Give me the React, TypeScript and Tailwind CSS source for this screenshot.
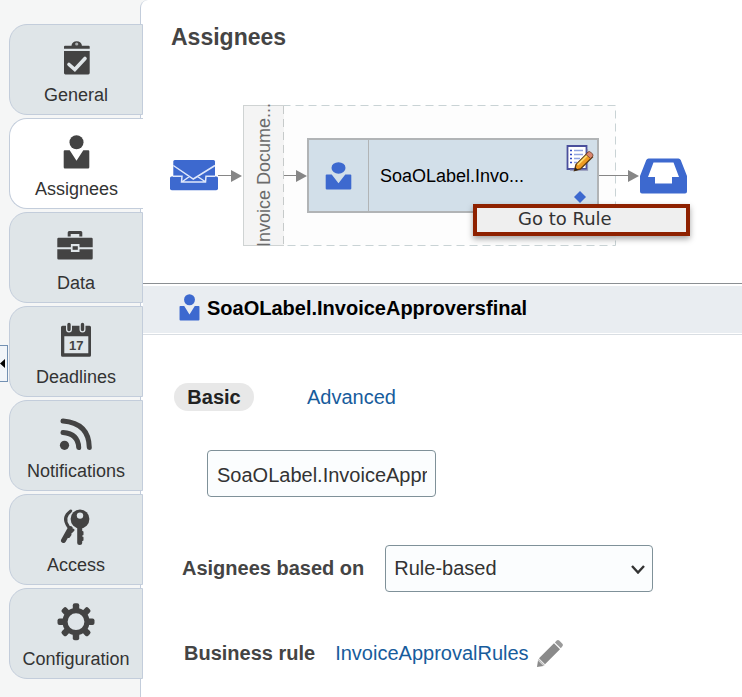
import { useState } from "react";
import type { ReactNode } from "react";

type NavItem = {
  id: string;
  label: string;
  icon: ReactNode;
};

function ClipboardIcon() {
  return (
    <svg viewBox="0 0 40 40" className="size-10" fill="#434343">
      <path d="M8 10.800V8.700q0-1 1-1h6.500a5.200 4.500 0 0 1 10.400 0h6.800q1 0 1 1v2.100z" />
      <circle cx="20.700" cy="6" r="1.600" fill="#a9adaf" />
      <path d="M8 12.900h25.700V35q0 1.400-1.400 1.400H9.400Q8 36.400 8 35z" />
      <path d="M13 26.500l5.800 5L29 20.500" fill="none" stroke="#dfe5e8" strokeWidth="3.600" strokeLinecap="round" />
    </svg>
  );
}

function PersonIcon({ className }: { className: string }) {
  return (
    <svg viewBox="6 3 27 34" preserveAspectRatio="none" className={className} fill="currentColor">
      <circle cx="19.500" cy="10.200" r="7" />
      <path d="M7.700 18.200h5l6.800 10.500 6.800-10.500h5q1 0 1 1v16q0 1.200-1.200 1.200H7.900q-1.200 0-1.200-1.200v-16q0-1 1-1z" />
    </svg>
  );
}

function BriefcaseIcon() {
  return (
    <svg viewBox="0 0 40 40" className="size-10" fill="#434343">
      <path d="M11.700 10.500V6.500q0-1.500 1.500-1.500h11.600q1.500 0 1.500 1.500v4h-3V8h-8.600v2.500z" />
      <path d="M2.500 11.800h33q1.200 0 1.200 1.200v8.300h-13.200v-3.300h-8.600v3.300H1.300V13q0-1.200 1.200-1.200z" />
      <path d="M1.300 23.200h13.600v2.800h8.600v-2.800h13.200v9q0 1.200-1.200 1.200h-33q-1.200 0-1.200-1.200z" />
      <rect x="16.600" y="20.200" width="5.200" height="3.600" />
    </svg>
  );
}

function CalendarIcon() {
  return (
    <svg viewBox="0 0 40 40" className="size-10" fill="#434343">
      <path d="M6.500 5.700h27Q35 5.700 35 7.200v28q0 1.500-1.500 1.500h-27Q5 36.700 5 35.200v-28q0-1.500 1.500-1.500zM8.300 16.300v17h24v-17z" fillRule="evenodd" />
      <path d="M13 4.500v5M26.500 4.500v5" stroke="#dfe5e8" strokeWidth="6" strokeLinecap="round" />
      <path d="M13 4.500v5M26.500 4.500v5" stroke="#434343" strokeWidth="3.400" strokeLinecap="round" />
      <text x="20.300" y="29.500" textAnchor="middle" fontSize="13" fontWeight="bold" fontFamily="Liberation Sans, sans-serif">
        17
      </text>
    </svg>
  );
}

function FeedIcon() {
  return (
    <svg viewBox="0 0 40 40" className="size-10" fill="none" stroke="#434343" strokeWidth="5" strokeLinecap="round">
      <circle cx="8.500" cy="31.300" r="4.600" fill="#434343" stroke="none" />
      <path d="M7 18.500q15.200 1.200 15.700 15M7 6.900q26 2.200 26.300 26.600" />
    </svg>
  );
}

function KeysIcon() {
  return (
    <svg viewBox="0 0 40 40" className="size-10" fill="none" stroke="#434343" strokeLinecap="round">
      <path d="M14.800 3q-9 6.500-2.500 15.500" strokeWidth="3" />
      <path d="M14.200 20.500L7.500 32.500" strokeWidth="5" />
      <path d="M15 24l2-2M12.500 28.500l1.500-2" strokeWidth="3" />
      <circle cx="24" cy="10.600" r="10.500" fill="#dfe5e8" stroke="none" />
      <circle cx="24" cy="11" r="9.400" fill="#434343" stroke="none" />
      <circle cx="24" cy="7.600" r="3.200" fill="#dfe5e8" stroke="none" />
      <path d="M23.700 18v16.500" strokeWidth="5" />
      <path d="M26.500 24v2.500M26.500 29.500v2.500" strokeWidth="2" />
    </svg>
  );
}

const GEAR_ANGLES = [0, 45, 90, 135, 180, 225, 270, 315];

function GearIcon() {
  return (
    <svg viewBox="0 0 40 40" className="size-10" fill="#434343">
      <circle cx="20" cy="19.700" r="11" fill="none" stroke="#434343" strokeWidth="5.200" />
      {GEAR_ANGLES.map((angle) => (
        <rect key={angle} x="16.800" y="1.200" width="6.400" height="7" rx="2" transform={`rotate(${angle} 20 19.700)`} />
      ))}
    </svg>
  );
}

function EnvelopeIcon() {
  return (
    <svg viewBox="0 0 48 32" className="h-8 w-12 shrink-0" fill="#3d69cf">
      <rect x="3.300" y="0" width="41.700" height="18" rx="1.500" />
      <path d="M1.500 16.500h45q1.500 0 1.500 1.500v10.500q0 1.800-1.800 1.800H1.800Q0 30.300 0 28.500V18q0-1.500 1.500-1.500z" />
      <path
        d="M3.300 5.500l20 13.500 21.700-13.500M3 16.200h9l-0.500 5.800h24l0.500-5.800h9M12.500 21.500l7-5M35 21.500l-7.500-5"
        fill="none"
        stroke="#dfe8fb"
        strokeWidth="1.500"
      />
    </svg>
  );
}

function TrayIcon() {
  return (
    <svg viewBox="0 0 47 36" className="h-9 w-[47px] shrink-0" fill="#3d69cf">
      <path d="M8.500 0.500h30q1.500 0 2.200 1.500L47 18v15.500q0 2-2 2H2q-2 0-2-2V18L6.300 2q.700-1.500 2.200-1.500zM13.500 4.500L8 19h7v6.500h17V19h7L33.500 4.500z" fillRule="evenodd" />
    </svg>
  );
}

function NotesIcon() {
  return (
    <svg viewBox="0 0 28 28" className="size-7">
      <path d="M1.500 1h19v23h-19z" fill="#fff" stroke="#4a4f9c" strokeWidth="1.800" />
      <path d="M4 25.200h17.500V4" fill="none" stroke="#8f93b5" strokeWidth="1.200" />
      <path d="M4 5.500h2M4 9.500h2M4 13.500h2M4 17.500h2" stroke="#2f49c4" strokeWidth="1.600" />
      <path d="M8 5.500h9M8 9.500h9M8 13.500h6M8 17.500h3" stroke="#8fa3e0" strokeWidth="1.600" />
      <path d="M8.500 25.500l1.500-6L21.500 8l5 4L14.500 24z" fill="#ee9a22" stroke="#5d3a10" strokeWidth="1.300" />
      <path d="M11.500 19.800L22 9.500" stroke="#ffd968" strokeWidth="1.800" />
      <path d="M20 9.500l2-2.500q1.300-1 2.500 0l2 2q1 1.200 0 2.500l-2 2z" fill="#d9866f" stroke="#6b3a24" strokeWidth="0.800" />
      <path d="M8.500 25.700l0.800-3.400 2.700 2.600z" fill="#222" />
    </svg>
  );
}

function PencilIcon() {
  return (
    <svg viewBox="0 0 26 27" className="h-[27px] w-[26px]" fill="#8a8a8a">
      <path d="M0 27l1-6.500 5.500 5.500z" />
      <path d="M1.300 19.500l5.900 6" fill="none" stroke="#bdbdbd" strokeWidth="1.500" />
      <path d="M2 18.300L17 3.300l6 6L8 24.300z" />
      <path d="M17.900 2.400L19.700.6q1.300-1 2.500 0l3.200 3.200q1 1.200 0 2.500l-1.600 1.900z" fill="#9a9a9a" />
    </svg>
  );
}

function Arrow({ className }: { className: string }) {
  return (
    <div className={`flex shrink-0 items-center ${className}`}>
      <span className="h-px flex-1 bg-[#868686]" />
      <svg viewBox="0 0 11 12" className="h-3 w-[11px]" fill="#868686">
        <path d="M0 0l11 6-11 6z" />
      </svg>
    </div>
  );
}

const NAV_ITEMS: NavItem[] = [
  { id: "general", label: "General", icon: <ClipboardIcon /> },
  {
    id: "assignees",
    label: "Assignees",
    icon: (
      <span className="flex h-10 w-10 items-center pl-[6px]">
        <PersonIcon className="h-[34px] w-[27px] text-[#434343]" />
      </span>
    ),
  },
  { id: "data", label: "Data", icon: <BriefcaseIcon /> },
  { id: "deadlines", label: "Deadlines", icon: <CalendarIcon /> },
  { id: "notifications", label: "Notifications", icon: <FeedIcon /> },
  { id: "access", label: "Access", icon: <KeysIcon /> },
  { id: "configuration", label: "Configuration", icon: <GearIcon /> },
];

function Sidebar({ active, onSelect }: { active: string; onSelect: (id: string) => void }) {
  return (
    <div className="relative z-10 flex shrink-0">
      <div className="w-[9px]">
        <button
          type="button"
          aria-label="Collapse sidebar"
          className="mt-[345px] flex h-[37px] w-2 items-center border border-l-0 border-[#7391b3] bg-[#f1f5f9]"
        >
          <svg viewBox="0 0 5 9" className="h-[9px] w-[5px]">
            <path d="M5 0v9L0 4.500z" />
          </svg>
        </button>
      </div>
      <nav className="flex w-[134px] flex-col gap-[3px] pt-6">
        {NAV_ITEMS.map((item) => (
          <button
            key={item.id}
            type="button"
            onClick={() => onSelect(item.id)}
            className={`flex h-[91px] flex-col items-center gap-[5px] rounded-l-[18px] border border-[#c3cddb] pt-[13px] text-lg/6 text-[#333] ${
              item.id === active ? "border-r-0 bg-white" : "bg-[#dfe5e8]"
            }`}
          >
            {item.icon}
            {item.label}
          </button>
        ))}
      </nav>
    </div>
  );
}

function ParticipantNode() {
  return (
    <div className="relative flex h-[75px] w-[292px] shrink-0 border-2 border-[#b1b4b6] bg-[#d2dfe9]">
      <div className="flex w-[60px] items-center justify-center border-r border-[#b1b4b6]">
        <PersonIcon className="h-7 w-[27px] text-[#3d69cf]" />
      </div>
      <p className="flex-1 self-center pl-[11px] text-lg/6 text-black">SoaOLabel.Invo...</p>
      <div className="flex flex-col items-end justify-between pt-[5px] pr-[3px] pb-2">
        <button type="button" aria-label="Edit participant">
          <NotesIcon />
        </button>
        <svg viewBox="0 0 12 12" className="mr-2 size-3" fill="#3d69cf">
          <path d="M6 0l6 6-6 6-6-6z" />
        </svg>
      </div>
      <button
        type="button"
        className="absolute top-16 left-[164px] z-10 flex h-8 w-[217px] items-center border-4 border-[#8e2100] bg-[#efefef] pb-[2px] pl-[41px] font-['DejaVu_Sans'] text-lg/6 text-[#333] shadow-[0_3px_6px_rgba(0,0,0,0.35)]"
      >
        Go to Rule
      </button>
    </div>
  );
}

function FlowDiagram() {
  return (
    <div className="mt-[52px] flex h-[141px] items-center pl-[27px]">
      <EnvelopeIcon />
      <Arrow className="mr-px w-6" />
      <div className="relative flex h-full w-[373px] shrink-0 items-center bg-[#fdfdfd]">
        <svg className="absolute inset-0 size-full" fill="none" stroke="#c9d3d5">
          <rect x="0.500" y="0.500" width="372" height="140" strokeDasharray="8 5" />
        </svg>
        <div className="relative flex h-full w-[41px] shrink-0 items-center justify-center border border-r-0 border-[#cfd3d3] bg-[#f4f4f4]">
          <span className="rotate-180 text-lg/6 whitespace-nowrap text-[#6b6b6b] [writing-mode:vertical-rl]">
            Invoice Docume...
          </span>
          <svg className="absolute top-0 right-0 h-full w-px" stroke="#c6caca">
            <path d="M0.500 0v141" strokeDasharray="8 5" />
          </svg>
        </div>
        <Arrow className="relative w-[23px]" />
        <ParticipantNode />
        <Arrow className="relative w-10" />
      </div>
      <div className="pl-6">
        <TrayIcon />
      </div>
    </div>
  );
}

export default function App() {
  const [active, setActive] = useState("assignees");
  const [name, setName] = useState("SoaOLabel.InvoiceApproversfinal");

  return (
    <div className="flex min-h-screen overflow-hidden bg-[#f5f6f6] font-['Liberation_Sans',sans-serif] text-xl/6 text-[#333]">
      <Sidebar active={active} onSelect={setActive} />
      <main className="-ml-[3px] min-w-0 flex-1 rounded-tl-lg border-l border-[#c3cddb] bg-white pl-[2px]">
        <h1 className="pt-[21px] pl-7 text-[23px]/8 font-bold text-[#444]">Assignees</h1>

        <FlowDiagram />

        <section className="mt-[37px] border-t border-[#8b8f93] pt-[2px]">
          <header className="border-b border-[#d9dee3]">
            <h2 className="mb-px flex h-[47px] items-center gap-[7px] bg-[#e9edf1] pb-1 pl-9 font-bold text-black">
              <PersonIcon className="h-[27px] w-[21px] text-[#3d69cf]" />
              SoaOLabel.InvoiceApproversfinal
            </h2>
          </header>

          <div className="mt-12 flex items-center gap-[53px] pl-[31px]">
            <button type="button" className="h-7 w-20 rounded-full bg-[#e8e8e8] font-bold text-[#222]">
              Basic
            </button>
            <a href="#advanced" className="text-[#175c9c]">
              Advanced
            </a>
          </div>

          <div className="mt-[39px] pl-16">
            <input
              type="text"
              aria-label="Participant name"
              value={name}
              onChange={(event) => setName(event.target.value)}
              className="h-[47px] w-[229px] rounded-[4px] border border-[#7f9199] bg-[#fbfdfe] pt-[3px] pr-2 pl-[9px] text-[#333]"
            />
          </div>

          <div className="mt-12 flex items-center gap-[21px] pl-[39px]">
            <label htmlFor="assignees-source" className="pb-[2px] font-bold text-[#444]">
              Asignees based on
            </label>
            <div className="relative">
              <select
                id="assignees-source"
                defaultValue="rule"
                className="block h-[47px] w-[268px] appearance-none rounded-[4px] border border-[#7f9199] bg-[#fbfdfe] px-2 pb-[2px] text-[#333]"
              >
                <option value="rule">Rule-based</option>
                <option value="names">Names and expressions</option>
              </select>
              <svg
                viewBox="0 0 14 9"
                className="pointer-events-none absolute top-5 right-2 h-[9px] w-[14px]"
                fill="none"
                stroke="#333"
                strokeWidth="2.400"
              >
                <path d="M1 1l6 6.500 6-6.500" />
              </svg>
            </div>
          </div>

          <div className="mt-12 flex items-center pb-[30px] pl-[41px]">
            <span className="pb-[2px] font-bold text-[#444]">Business rule</span>
            <a href="#rule" className="ml-5 pb-[2px] text-[#175c9c]">
              InvoiceApprovalRules
            </a>
            <button type="button" aria-label="Edit business rule" className="ml-2">
              <PencilIcon />
            </button>
          </div>
        </section>
      </main>
    </div>
  );
}
